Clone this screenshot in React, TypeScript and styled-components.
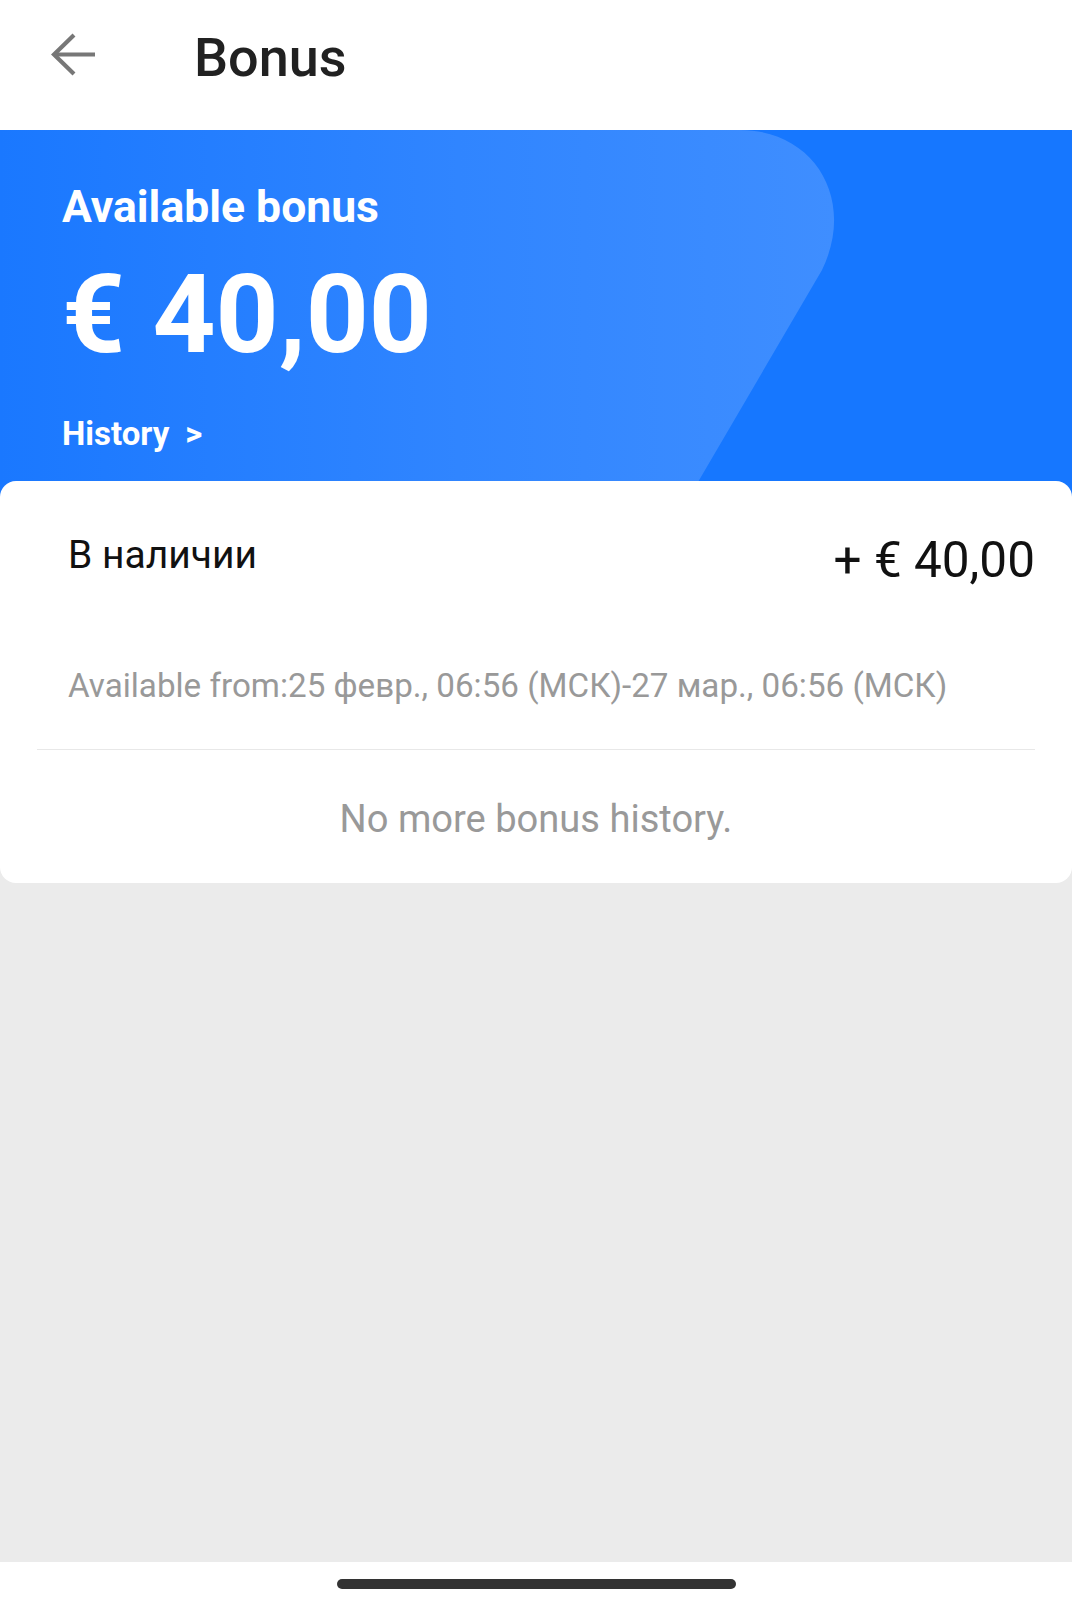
import React from "react";
import styled, { createGlobalStyle } from "styled-components";

const GlobalStyle = createGlobalStyle`
  html, body {
    margin: 0;
    padding: 0;
    background: #ebebeb;
  }
  body {
    font-family: Roboto, "Noto Sans", "Liberation Sans", sans-serif;
    -webkit-font-smoothing: antialiased;
  }
  * { box-sizing: border-box; }
`;

const Page = styled.div`
  display: flex;
  flex-direction: column;
  height: 100vh;
  min-height: 1606px;
  background: #ebebeb;
`;

const Header = styled.header`
  height: 130px;
  flex: none;
  background: #ffffff;
  display: flex;
  align-items: flex-start;
  padding: 31px 0 0 51px;
`;

const BackButton = styled.button`
  border: 0;
  background: none;
  padding: 0;
  margin: 2px 0 0 0;
  width: 44px;
  height: 44px;
  display: flex;
  cursor: pointer;
`;

const Title = styled.h1`
  margin: 0 0 0 99px;
  font-size: 54px;
  line-height: 1;
  font-weight: 500;
  color: #212121;
`;

const Banner = styled.section`
  position: relative;
  flex: none;
  background: #1677ff;
  padding: 55px 0 47px 62px;
  overflow: hidden;
`;

const Wave = styled.svg`
  position: absolute;
  left: 0;
  top: 0;
  width: 1072px;
  height: 366px;
`;

const BannerContent = styled.div`
  position: relative;
  display: flex;
  flex-direction: column;
  align-items: flex-start;
  color: #ffffff;
`;

const BannerLabel = styled.div`
  font-size: 44.5px;
  line-height: 1;
  font-weight: 700;
`;

const BannerAmount = styled.div`
  margin-top: 30px;
  font-size: 110px;
  line-height: 1;
  font-weight: 700;
`;

const HistoryLink = styled.a`
  margin-top: 47px;
  font-size: 33px;
  line-height: 1;
  font-weight: 700;
  color: #ffffff;
  text-decoration: none;
  display: flex;
  gap: 16px;
`;

const Card = styled.section`
  position: relative;
  flex: none;
  margin-top: -16px;
  background: #ffffff;
  border-radius: 16px;
  padding: 55px 37px 45px;
`;

const Item = styled.div`
  padding: 0 0 47px 31px;
  border-bottom: 1px solid #e8e8e8;
`;

const ItemRow = styled.div`
  display: flex;
  justify-content: space-between;
  align-items: flex-start;
`;

const ItemTitle = styled.div`
  font-size: 39px;
  line-height: 1;
  color: #111111;
`;

const ItemAmount = styled.div`
  font-size: 49.5px;
  line-height: 1;
  color: #111111;
`;

const ItemDate = styled.div`
  margin-top: 84px;
  font-size: 33.2px;
  line-height: 1;
  color: #999999;
  white-space: nowrap;
`;

const EmptyNote = styled.div`
  margin-top: 50px;
  text-align: center;
  font-size: 38.1px;
  line-height: 1;
  color: #999999;
`;

const Filler = styled.div`
  flex: 1;
  background: #ebebeb;
`;

const NavBar = styled.div`
  flex: none;
  height: 44px;
  background: #ffffff;
  display: flex;
  justify-content: center;
  padding-top: 17px;
`;

const HomeIndicator = styled.div`
  width: 399px;
  height: 10px;
  border-radius: 5px;
  background: #333333;
`;

export default function App() {
  return (
    <>
      <GlobalStyle />
      <Page>
        <Header>
          <BackButton aria-label="Back">
            <svg width="44" height="44" viewBox="0 0 44 44" fill="none">
              <path d="M3 21.5H44" stroke="#777777" strokeWidth="4.2" />
              <path d="M23 2L3 21.5L23 41" stroke="#777777" strokeWidth="4.2" strokeLinejoin="miter" />
            </svg>
          </BackButton>
          <Title>Bonus</Title>
        </Header>
        <Banner>
          <Wave viewBox="0 0 1072 366" preserveAspectRatio="none">
            <defs>
              <linearGradient id="waveGrad" x1="0" y1="0" x2="1" y2="0">
                <stop offset="0" stopColor="#1a78ff" />
                <stop offset="0.55" stopColor="#3085ff" />
                <stop offset="1" stopColor="#3f8eff" />
              </linearGradient>
            </defs>
            <path
              d="M0 0 H740 C815 0 856 70 822 140 L698 352 L692 366 H0 Z"
              fill="url(#waveGrad)"
            />
          </Wave>
          <BannerContent>
            <BannerLabel>Available bonus</BannerLabel>
            <BannerAmount>€ 40,00</BannerAmount>
            <HistoryLink href="#">
              <span>History</span>
              <span>&gt;</span>
            </HistoryLink>
          </BannerContent>
        </Banner>
        <Card>
          <Item>
            <ItemRow>
              <ItemTitle>В наличии</ItemTitle>
              <ItemAmount>+ € 40,00</ItemAmount>
            </ItemRow>
            <ItemDate>Available from:25 февр., 06:56 (МСК)-27 мар., 06:56 (МСК)</ItemDate>
          </Item>
          <EmptyNote>No more bonus history.</EmptyNote>
        </Card>
        <Filler />
        <NavBar>
          <HomeIndicator />
        </NavBar>
      </Page>
    </>
  );
}
